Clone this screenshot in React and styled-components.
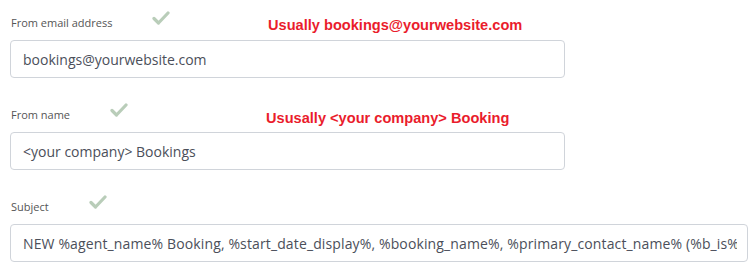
import React from "react";
import styled, { createGlobalStyle } from "styled-components";

const Global = createGlobalStyle`
  body {
    margin: 0;
    background: #fff;
    font-family: "Open Sans", "Noto Sans", sans-serif;
  }
`;

const Form = styled.div`
  padding: 0 2px 0 10px;
  width: 751px;
  box-sizing: border-box;
`;

const Field = styled.div`
  padding-top: 8px;
  padding-bottom: 14px;
`;

const LabelRow = styled.div`
  display: grid;
  grid-template-columns: ${(p) => p.noteAt}px 1fr;
  align-items: center;
  height: 28px;
  margin-bottom: 4px;
`;

const LabelWrap = styled.div`
  display: flex;
  align-items: center;
`;

const Label = styled.span`
  font-size: 11px;
  color: #555;
  padding-left: 1px;
`;

const Check = styled.svg`
  margin-left: 40px;
  width: 18px;
  height: 14px;
  transform: translateY(-4px);
`;

const Note = styled.span`
  font-family: "Liberation Sans", Arial, sans-serif;
  font-weight: bold;
  font-size: 14.6px;
  color: #ea1c2c;
  transform: translateY(${(p) => p.shift}px);
`;

const Box = styled.div`
  width: ${(p) => (p.wide ? "738px" : "555px")};
  height: 38px;
  box-sizing: border-box;
  border: 1px solid #d0d4da;
  border-radius: 4px;
  padding: 0 10px 0 12px;
  display: flex;
  align-items: center;
  font-size: 14px;
  color: #4b4f5a;
`;

const Value = styled.span`
  flex: 1;
  overflow: hidden;
  white-space: nowrap;
  letter-spacing: ${(p) => (p.wide ? "0.13px" : "0")};
`;

const Tick = () => (
  <Check viewBox="0 0 18 14">
    <path d="M2 7.5 L6.5 12 L16 2" fill="none" stroke="#b9cdb9" strokeWidth="3.2" strokeLinecap="round" strokeLinejoin="round" />
  </Check>
);

const fields = [
  { label: "From email address", note: "Usually bookings@yourwebsite.com", noteAt: 258, shift: 3, value: "bookings@yourwebsite.com" },
  { label: "From name", note: "Ususally <your company> Booking", noteAt: 256, shift: 4, value: "<your company> Bookings" },
  {
    label: "Subject",
    value: "NEW %agent_name% Booking, %start_date_display%, %booking_name%, %primary_contact_name% (%b_is%)",
    wide: true,
  },
];

export default function App() {
  return (
    <Form>
      <Global />
      {fields.map((f) => (
        <Field key={f.label}>
          <LabelRow noteAt={f.noteAt || 256}>
            <LabelWrap>
              <Label>{f.label}</Label>
              <Tick />
            </LabelWrap>
            {f.note && <Note shift={f.shift}>{f.note}</Note>}
          </LabelRow>
          <Box wide={f.wide}>
            <Value wide={f.wide}>{f.value}</Value>
          </Box>
        </Field>
      ))}
    </Form>
  );
}
